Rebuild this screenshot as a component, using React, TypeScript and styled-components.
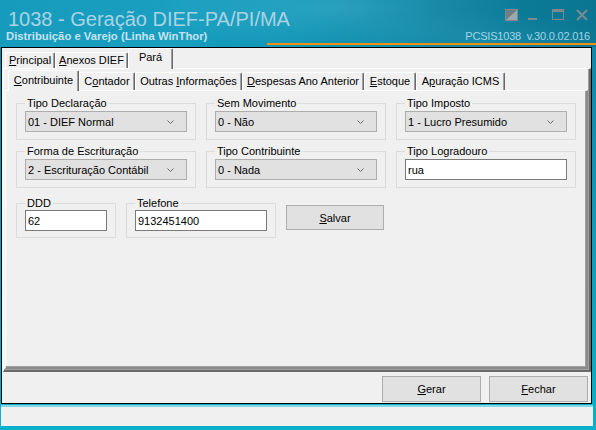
import React from "react";
import styled, { createGlobalStyle } from "styled-components";

const GlobalStyle = createGlobalStyle`
  html, body {
    margin: 0;
    padding: 0;
  }
  body {
    width: 596px;
    height: 430px;
    overflow: hidden;
    font-family: "Liberation Sans", Arial, sans-serif;
    font-size: 11px;
    color: #000;
  }
`;

const Window = styled.div`
  width: 596px;
  height: 430px;
  display: flex;
  flex-direction: column;
  background: linear-gradient(to bottom, #0b86a6 0%, #0c9bb8 50%, #08b2ca 100%);
`;

const TitleBar = styled.header`
  height: 47px;
  flex: none;
  display: flex;
  flex-direction: column;
  background:
    radial-gradient(ellipse 260px 60px at 340px 8px, rgba(120, 210, 230, 0.25), transparent 70%),
    radial-gradient(ellipse 200px 40px at 470px 40px, rgba(90, 200, 225, 0.18), transparent 70%),
    linear-gradient(100deg, #179bbd 0%, #1a9fc0 30%, #1195b6 50%, #0b7f9e 75%, #0a7591 100%);
`;

const TitleRow = styled.div`
  display: flex;
  justify-content: space-between;
  align-items: flex-start;
  height: 31px;
  padding: 0 8px;
`;

const Title = styled.h1`
  margin: 7px 0 0;
  font: 400 20px/24px "Liberation Sans", Arial, sans-serif;
  color: #a9d3e3;
`;

const Controls = styled.div`
  display: flex;
  align-items: flex-start;
  margin-top: 9px;
`;

const ControlIcon = styled.svg<{ $gap: number }>`
  display: block;
  margin-left: ${(p) => p.$gap}px;
`;

const SubRow = styled.div`
  display: flex;
  justify-content: space-between;
  align-items: flex-end;
  height: 12px;
  padding: 0 6px;
  line-height: 13px;
`;

const Subtitle = styled.div`
  font-weight: 700;
  font-size: 11.3px;
  color: #c3e3ee;
`;

const Version = styled.div`
  white-space: pre;
  color: #a3d4e4;
  letter-spacing: -0.2px;
`;

const Accent = styled.div`
  height: 2px;
  margin-left: 267px;
  background: #f0900e;
`;

const Client = styled.div`
  width: 591px;
  height: 357px;
  margin-left: 1px;
  box-sizing: border-box;
  border: 1px solid #000;
  background: #f0f0f0;
  display: flex;
  flex-direction: column;
`;

const TabStrip = styled.div<{ $height: number; $indent: number }>`
  display: flex;
  align-items: flex-end;
  height: ${(p) => p.$height}px;
  padding-left: ${(p) => p.$indent}px;
  flex: none;
`;

const Tab = styled.div<{ $active?: boolean; $width: number; $height: number; $pad: number }>`
  box-sizing: border-box;
  width: ${(p) => p.$width}px;
  height: ${(p) => p.$height}px;
  margin-bottom: ${(p) => (p.$active ? -1 : 0)}px;
  position: relative;
  z-index: ${(p) => (p.$active ? 1 : 0)};
  display: flex;
  justify-content: center;
  padding-top: ${(p) => p.$pad}px;
  line-height: 13px;
  white-space: nowrap;
  background: #f0f0f0;
  border-top: 1px solid #fff;
  border-left: 1px solid #fff;
  border-right: 1px solid #696969;
  box-shadow: inset -1px 0 #a0a0a0;
  border-radius: 2px 2px 0 0;
`;

const OuterPanel = styled.div`
  height: 304px;
  margin-left: 1px;
  box-sizing: border-box;
  border-top: 1px solid #fff;
  border-left: 1px solid #fff;
  border-right: 2px solid #696969;
  border-bottom: 2px solid #696969;
  box-shadow: inset -1px -1px #a0a0a0;
  padding: 1px 1px 1px 1px;
  display: flex;
  flex-direction: column;
`;

const InnerPanel = styled.div`
  flex: 1;
  box-sizing: border-box;
  border-top: 1px solid #fff;
  border-left: 1px solid #fff;
  border-right: 2px solid #8a8a8a;
  border-bottom: 2px solid #8a8a8a;
  box-shadow: inset -1px -1px #a0a0a0;
  padding: 6px 10px;
`;

const Grid = styled.div<{ $top: number }>`
  display: grid;
  grid-template-columns: repeat(3, 180px);
  column-gap: 10px;
  margin-top: ${(p) => p.$top}px;
`;

const Row = styled.div<{ $top: number }>`
  display: flex;
  align-items: flex-start;
  gap: 10px;
  margin-top: ${(p) => p.$top}px;
`;

const Group = styled.fieldset<{ $width?: number; $padTop: number; $padBottom: number }>`
  margin: 0;
  min-width: 0;
  box-sizing: border-box;
  width: ${(p) => (p.$width ? `${p.$width}px` : "auto")};
  border: 1px solid #dcdcdc;
  padding: ${(p) => p.$padTop}px 8px ${(p) => p.$padBottom}px 8px;
`;

const Legend = styled.legend`
  padding: 0 2px;
  line-height: 13px;
`;

const Combo = styled.div`
  height: 21px;
  box-sizing: border-box;
  display: flex;
  align-items: center;
  justify-content: space-between;
  padding-left: 2px;
  background: #e1e1e1;
  border: 1px solid #adadad;
  white-space: nowrap;
`;

const Chevron = styled.svg`
  margin-right: 12px;
  flex: none;
`;

const Field = styled.div`
  height: 21px;
  box-sizing: border-box;
  display: flex;
  align-items: center;
  padding-left: 2px;
  background: #fff;
  border: 1px solid #7a7a7a;
`;

const Button = styled.div<{ $width: number; $height: number; $top?: number }>`
  width: ${(p) => p.$width}px;
  height: ${(p) => p.$height}px;
  margin-top: ${(p) => p.$top ?? 0}px;
  box-sizing: border-box;
  display: flex;
  align-items: center;
  justify-content: center;
  background: #e1e1e1;
  border: 1px solid #adadad;
  flex: none;
`;

const BottomBar = styled.div`
  height: 31px;
  display: flex;
  justify-content: flex-end;
  gap: 8px;
  padding: 4px 3px 0 0;
  box-sizing: border-box;
`;

const StatusBar = styled.div`
  height: 19px;
  margin: 1px 3px 0 1px;
  background: #f0f0f0;
  border-top: 2px solid #86d8e7;
`;

const Key = styled.u`
  text-decoration: underline;
  text-underline-offset: 1px;
`;

const down = (
  <Chevron width="7" height="4" viewBox="0 0 7 4">
    <polyline points="0.5,0.5 3.5,3.5 6.5,0.5" fill="none" stroke="#6a6a6a" strokeWidth="1" />
  </Chevron>
);

const ComboGroup = ({ label, value }: { label: string; value: string }) => (
  <Group $padTop={1} $padBottom={7}>
    <Legend>{label}</Legend>
    <Combo>
      <span>{value}</span>
      {down}
    </Combo>
  </Group>
);

const EditGroup = ({
  label,
  value,
  width,
  padTop = 1,
  padBottom = 7,
}: {
  label: string;
  value: string;
  width?: number;
  padTop?: number;
  padBottom?: number;
}) => (
  <Group $width={width} $padTop={padTop} $padBottom={padBottom}>
    <Legend>{label}</Legend>
    <Field>{value}</Field>
  </Group>
);

export default function App() {
  return (
    <Window>
      <GlobalStyle />
      <TitleBar>
        <TitleRow>
          <Title>1038 - Geração DIEF-PA/PI/MA</Title>
          <Controls>
            <ControlIcon $gap={0} width="13" height="12" viewBox="0 0 13 12">
              <rect x="0.5" y="0.5" width="12" height="11" fill="#9aa9ae" stroke="#7c8a90" />
              <polygon points="1,1 12,1 1,11" fill="#6f7e84" />
            </ControlIcon>
            <ControlIcon $gap={10} width="9" height="12" viewBox="0 0 9 12">
              <rect x="0" y="9" width="9" height="2" fill="#7c8a90" />
            </ControlIcon>
            <ControlIcon $gap={15} width="12" height="12" viewBox="0 0 12 12">
              <rect x="0.5" y="0.5" width="11" height="10" fill="none" stroke="#7c8a90" />
              <rect x="0" y="0" width="12" height="3" fill="#7c8a90" />
            </ControlIcon>
            <ControlIcon $gap={12} width="12" height="12" viewBox="0 0 12 12">
              <path d="M1 1 L11 11 M11 1 L1 11" stroke="#7c8a90" strokeWidth="2" />
            </ControlIcon>
          </Controls>
        </TitleRow>
        <SubRow>
          <Subtitle>Distribuição e Varejo (Linha WinThor)</Subtitle>
          <Version>PCSIS1038  v.30.0.02.016</Version>
        </SubRow>
        <Accent />
      </TitleBar>

      <Client>
        <TabStrip $height={20} $indent={3}>
          <Tab $width={50} $height={16} $pad={1}>
            <span>
              <Key>P</Key>rincipal
            </span>
          </Tab>
          <Tab $width={73} $height={16} $pad={1}>
            <span>
              <Key>A</Key>nexos DIEF
            </span>
          </Tab>
          <Tab $active $width={45} $height={21} $pad={2}>
            Pará
          </Tab>
        </TabStrip>

        <OuterPanel>
          <TabStrip $height={20} $indent={3}>
            <Tab $active $width={71} $height={21} $pad={3}>
              <span>
                <Key>C</Key>ontribuinte
              </span>
            </Tab>
            <Tab $width={56} $height={18} $pad={2}>
              <span>
                C<Key>o</Key>ntador
              </span>
            </Tab>
            <Tab $width={107} $height={18} $pad={2}>
              <span>
                Outras <Key>I</Key>nformações
              </span>
            </Tab>
            <Tab $width={122} $height={18} $pad={2}>
              <span>
                <Key>D</Key>espesas Ano Anterior
              </span>
            </Tab>
            <Tab $width={52} $height={18} $pad={2}>
              <span>
                <Key>E</Key>stoque
              </span>
            </Tab>
            <Tab $width={89} $height={18} $pad={2}>
              <span>
                A<Key>p</Key>uração ICMS
              </span>
            </Tab>
          </TabStrip>

          <InnerPanel>
            <Grid $top={0}>
              <ComboGroup label="Tipo Declaração" value="01 - DIEF Normal" />
              <ComboGroup label="Sem Movimento" value="0 - Não" />
              <ComboGroup label="Tipo Imposto" value="1 - Lucro Presumido" />
            </Grid>
            <Grid $top={5}>
              <ComboGroup label="Forma de Escrituração" value="2 - Escrituração Contábil" />
              <ComboGroup label="Tipo Contribuinte" value="0 - Nada" />
              <EditGroup label="Tipo Logradouro" value="rua" />
            </Grid>
            <Row $top={9}>
              <EditGroup label="DDD" value="62" width={100} padTop={0} padBottom={6} />
              <EditGroup label="Telefone" value="9132451400" width={150} padTop={0} padBottom={6} />
              <Button $width={98} $height={25} $top={8}>
                <span>
                  <Key>S</Key>alvar
                </span>
              </Button>
            </Row>
          </InnerPanel>
        </OuterPanel>

        <BottomBar>
          <Button $width={99} $height={26}>
            <span>
              <Key>G</Key>erar
            </span>
          </Button>
          <Button $width={99} $height={26}>
            <span>
              <Key>F</Key>echar
            </span>
          </Button>
        </BottomBar>
      </Client>

      <StatusBar />
    </Window>
  );
}
